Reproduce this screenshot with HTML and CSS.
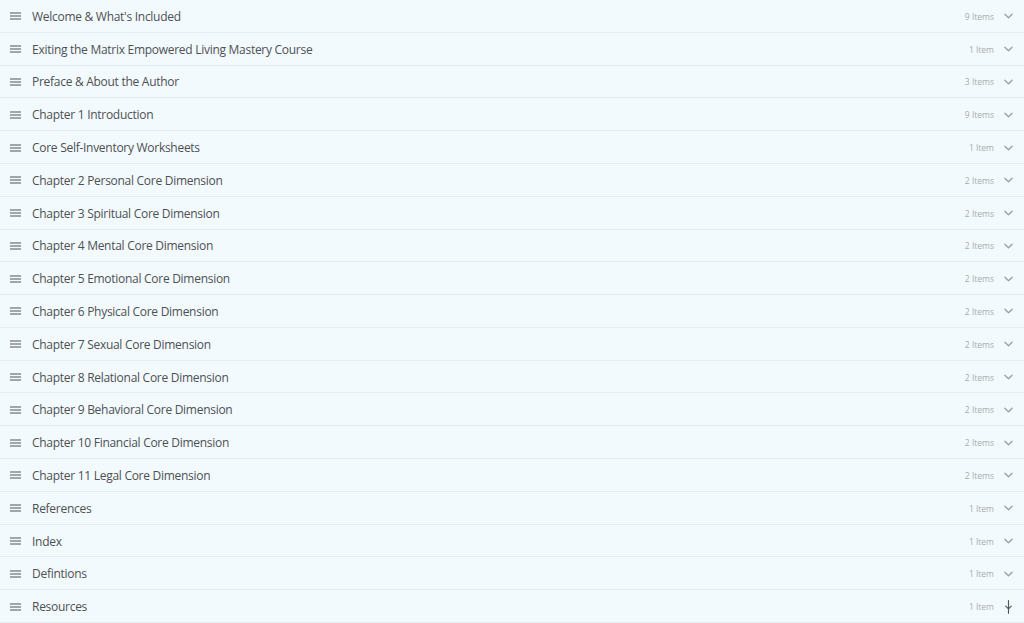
FILE: index.html
```html
<!DOCTYPE html>
<html>
<head>
<meta charset="utf-8">
<link rel="stylesheet" href="styles.css">
</head>
<body>
<ul class="list">
  <li class="row"><span class="handle"><i></i><i></i><i></i></span><span class="title">Welcome &amp; What's Included</span><span class="count">9 Items</span><svg class="chev" viewBox="0 0 10 6"><path d="M1 1 L5 5 L9 1"/></svg></li>
  <li class="row"><span class="handle"><i></i><i></i><i></i></span><span class="title">Exiting the Matrix Empowered Living Mastery Course</span><span class="count">1 Item</span><svg class="chev" viewBox="0 0 10 6"><path d="M1 1 L5 5 L9 1"/></svg></li>
  <li class="row"><span class="handle"><i></i><i></i><i></i></span><span class="title">Preface &amp; About the Author</span><span class="count">3 Items</span><svg class="chev" viewBox="0 0 10 6"><path d="M1 1 L5 5 L9 1"/></svg></li>
  <li class="row"><span class="handle"><i></i><i></i><i></i></span><span class="title">Chapter 1 Introduction</span><span class="count">9 Items</span><svg class="chev" viewBox="0 0 10 6"><path d="M1 1 L5 5 L9 1"/></svg></li>
  <li class="row"><span class="handle"><i></i><i></i><i></i></span><span class="title">Core Self-Inventory Worksheets</span><span class="count">1 Item</span><svg class="chev" viewBox="0 0 10 6"><path d="M1 1 L5 5 L9 1"/></svg></li>
  <li class="row"><span class="handle"><i></i><i></i><i></i></span><span class="title">Chapter 2 Personal Core Dimension</span><span class="count">2 Items</span><svg class="chev" viewBox="0 0 10 6"><path d="M1 1 L5 5 L9 1"/></svg></li>
  <li class="row"><span class="handle"><i></i><i></i><i></i></span><span class="title">Chapter 3 Spiritual Core Dimension</span><span class="count">2 Items</span><svg class="chev" viewBox="0 0 10 6"><path d="M1 1 L5 5 L9 1"/></svg></li>
  <li class="row"><span class="handle"><i></i><i></i><i></i></span><span class="title">Chapter 4 Mental Core Dimension</span><span class="count">2 Items</span><svg class="chev" viewBox="0 0 10 6"><path d="M1 1 L5 5 L9 1"/></svg></li>
  <li class="row"><span class="handle"><i></i><i></i><i></i></span><span class="title">Chapter 5 Emotional Core Dimension</span><span class="count">2 Items</span><svg class="chev" viewBox="0 0 10 6"><path d="M1 1 L5 5 L9 1"/></svg></li>
  <li class="row"><span class="handle"><i></i><i></i><i></i></span><span class="title">Chapter 6 Physical Core Dimension</span><span class="count">2 Items</span><svg class="chev" viewBox="0 0 10 6"><path d="M1 1 L5 5 L9 1"/></svg></li>
  <li class="row"><span class="handle"><i></i><i></i><i></i></span><span class="title">Chapter 7 Sexual Core Dimension</span><span class="count">2 Items</span><svg class="chev" viewBox="0 0 10 6"><path d="M1 1 L5 5 L9 1"/></svg></li>
  <li class="row"><span class="handle"><i></i><i></i><i></i></span><span class="title">Chapter 8 Relational Core Dimension</span><span class="count">2 Items</span><svg class="chev" viewBox="0 0 10 6"><path d="M1 1 L5 5 L9 1"/></svg></li>
  <li class="row"><span class="handle"><i></i><i></i><i></i></span><span class="title">Chapter 9 Behavioral Core Dimension</span><span class="count">2 Items</span><svg class="chev" viewBox="0 0 10 6"><path d="M1 1 L5 5 L9 1"/></svg></li>
  <li class="row"><span class="handle"><i></i><i></i><i></i></span><span class="title">Chapter 10 Financial Core Dimension</span><span class="count">2 Items</span><svg class="chev" viewBox="0 0 10 6"><path d="M1 1 L5 5 L9 1"/></svg></li>
  <li class="row"><span class="handle"><i></i><i></i><i></i></span><span class="title">Chapter 11 Legal Core Dimension</span><span class="count">2 Items</span><svg class="chev" viewBox="0 0 10 6"><path d="M1 1 L5 5 L9 1"/></svg></li>
  <li class="row"><span class="handle"><i></i><i></i><i></i></span><span class="title">References</span><span class="count">1 Item</span><svg class="chev" viewBox="0 0 10 6"><path d="M1 1 L5 5 L9 1"/></svg></li>
  <li class="row"><span class="handle"><i></i><i></i><i></i></span><span class="title">Index</span><span class="count">1 Item</span><svg class="chev" viewBox="0 0 10 6"><path d="M1 1 L5 5 L9 1"/></svg></li>
  <li class="row"><span class="handle"><i></i><i></i><i></i></span><span class="title">Defintions</span><span class="count">1 Item</span><svg class="chev" viewBox="0 0 10 6"><path d="M1 1 L5 5 L9 1"/></svg></li>
  <li class="row"><span class="handle"><i></i><i></i><i></i></span><span class="title">Resources</span><span class="count">1 Item</span><svg class="chev cursor" viewBox="0 0 10 16"><path d="M2 7 L5 10 L8 7 M5 1 L5 15"/></svg></li>
</ul>
</body>
</html>
```

FILE: styles.css
```css
html, body {
  margin: 0;
  padding: 0;
  height: 623px;
  overflow: hidden;
  background: #f4fafd;
}
.list {
  list-style: none;
  margin: 0;
  padding: 0;
  height: 623px;
  display: grid;
  grid-template-rows: repeat(19, 1fr);
  font-family: "Open Sans", "Noto Sans", sans-serif;
}
.row {
  display: flex;
  align-items: center;
  border-bottom: 1px solid #e3edf2;
  background: #f3fafd;
  padding: 1px 11px 0 10px;
}
.handle {
  display: flex;
  flex-direction: column;
  gap: 1px;
  width: 11px;
  margin-right: 11px;
}
.handle i {
  display: block;
  height: 2px;
  background: #a3a6a9;
}
.title {
  flex: 1;
  font-size: 12px;
  letter-spacing: -0.28px;
  color: #4d5054;
  white-space: nowrap;
}
.count {
  font-size: 8.5px;
  color: #a7abaf;
  margin-right: 10px;
}
.chev {
  width: 9px;
  height: 6px;
  fill: none;
  stroke: #9a9da1;
  stroke-width: 1.4;
  stroke-linecap: round;
  stroke-linejoin: round;
}
.chev.cursor {
  height: 16px;
  stroke: #555;
  stroke-width: 1.3;
}
```
